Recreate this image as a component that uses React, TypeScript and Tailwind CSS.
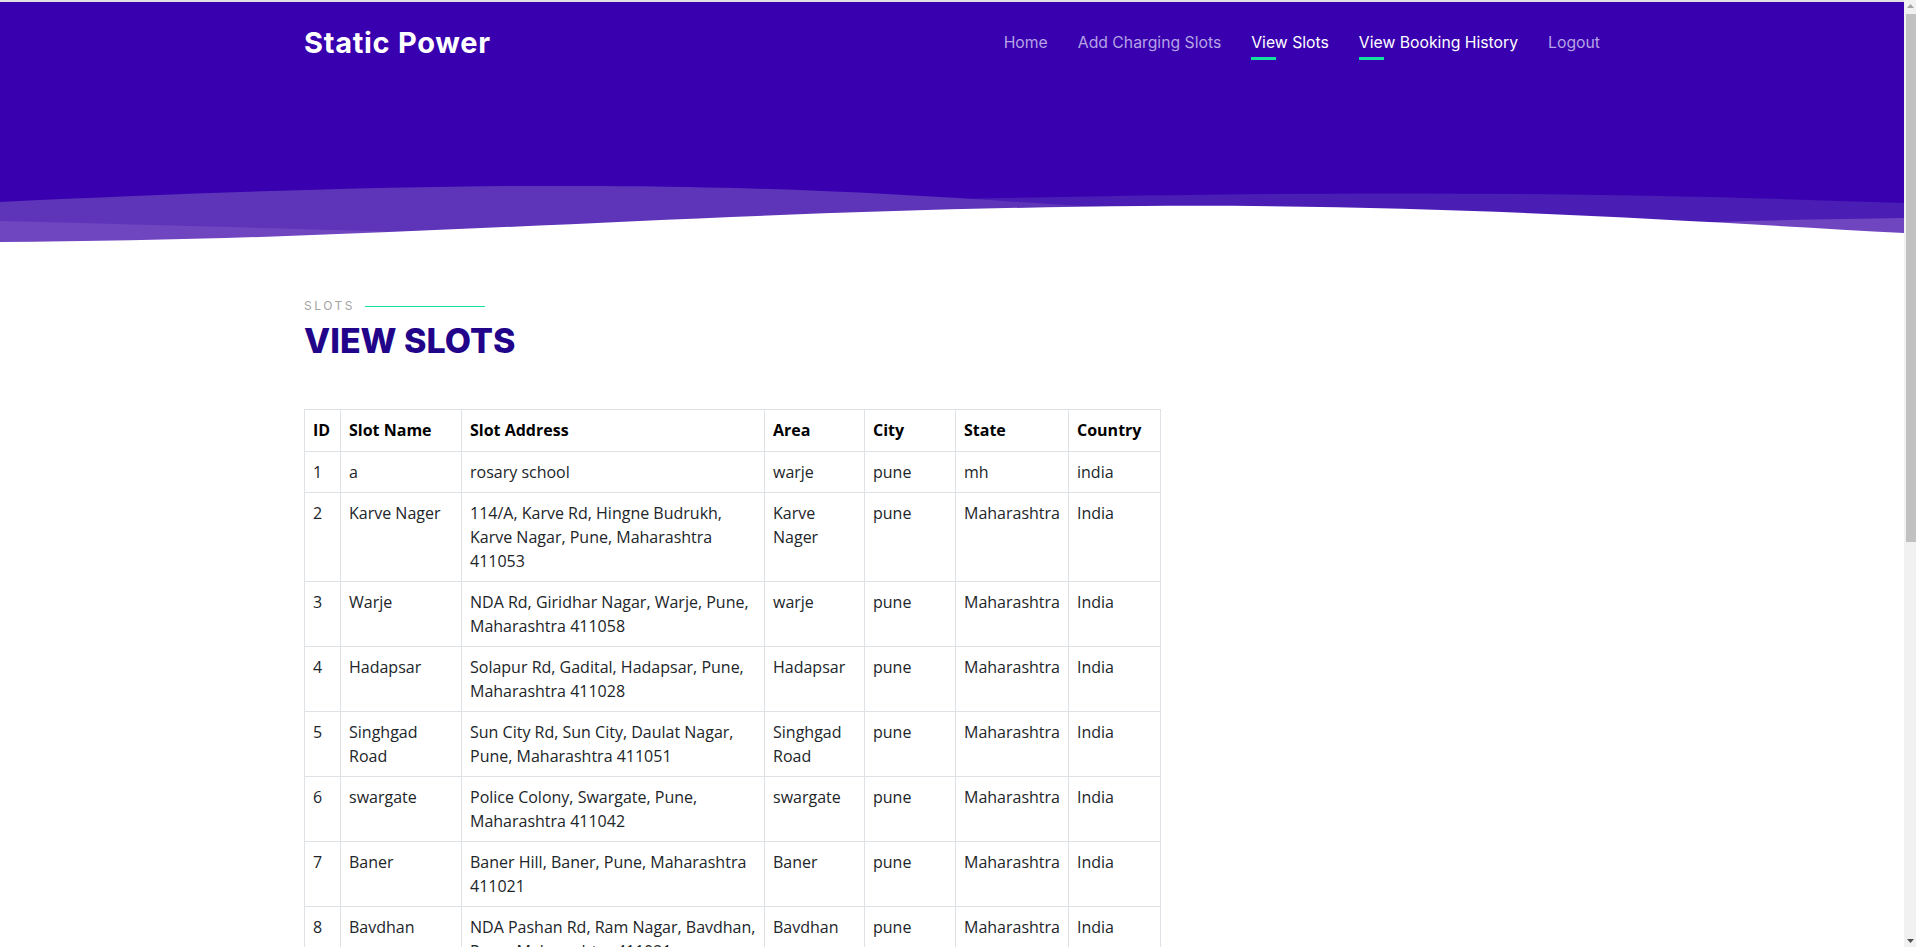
import React from 'react';

type Slot = {
  id: number;
  name: string;
  address: string;
  area: string;
  city: string;
  state: string;
  country: string;
};

const slots: Slot[] = [
  { id: 1, name: 'a', address: 'rosary school', area: 'warje', city: 'pune', state: 'mh', country: 'india' },
  {
    id: 2,
    name: 'Karve Nager',
    address: '114/A, Karve Rd, Hingne Budrukh, Karve Nagar, Pune, Maharashtra 411053',
    area: 'Karve Nager',
    city: 'pune',
    state: 'Maharashtra',
    country: 'India',
  },
  {
    id: 3,
    name: 'Warje',
    address: 'NDA Rd, Giridhar Nagar, Warje, Pune, Maharashtra 411058',
    area: 'warje',
    city: 'pune',
    state: 'Maharashtra',
    country: 'India',
  },
  {
    id: 4,
    name: 'Hadapsar',
    address: 'Solapur Rd, Gadital, Hadapsar, Pune, Maharashtra 411028',
    area: 'Hadapsar',
    city: 'pune',
    state: 'Maharashtra',
    country: 'India',
  },
  {
    id: 5,
    name: 'Singhgad Road',
    address: 'Sun City Rd, Sun City, Daulat Nagar, Pune, Maharashtra 411051',
    area: 'Singhgad Road',
    city: 'pune',
    state: 'Maharashtra',
    country: 'India',
  },
  {
    id: 6,
    name: 'swargate',
    address: 'Police Colony, Swargate, Pune, Maharashtra 411042',
    area: 'swargate',
    city: 'pune',
    state: 'Maharashtra',
    country: 'India',
  },
  {
    id: 7,
    name: 'Baner',
    address: 'Baner Hill, Baner, Pune, Maharashtra 411021',
    area: 'Baner',
    city: 'pune',
    state: 'Maharashtra',
    country: 'India',
  },
  {
    id: 8,
    name: 'Bavdhan',
    address: 'NDA Pashan Rd, Ram Nagar, Bavdhan, Pune, Maharashtra 411021',
    area: 'Bavdhan',
    city: 'pune',
    state: 'Maharashtra',
    country: 'India',
  },
];

const navLinks = [
  { label: 'Home', active: false },
  { label: 'Add Charging Slots', active: false },
  { label: 'View Slots', active: true },
  { label: 'View Booking History', active: true },
  { label: 'Logout', active: false },
];

const Wave: React.FC = () => (
  <svg
    className="absolute bottom-0 left-0 h-[60px] w-full"
    viewBox="0 0 1904 60"
    preserveAspectRatio="none"
  >
    <path d="M0,22 C400,2 700,10 960,17 C1200,12 1500,6 1904,21 L1904,60 L0,60 Z" fill="#4a1db5" />
    <path d="M0,20 C250,8 450,3 600,4 C780,5 900,12 1050,22 C1150,28 1250,36 1350,50 L1350,60 L0,60 Z" fill="#5e35b9" />
    <path d="M0,39 C200,44 420,50 720,60 L0,60 Z" fill="#6f45c0" />
    <path d="M1380,60 C1560,44 1740,38 1904,36 L1904,60 Z" fill="#6f45c0" />
    <path d="M0,60 C400,58 700,28 1144,24 C1450,22 1700,40 1904,51 L1904,60 Z" fill="#ffffff" />
  </svg>
);

const Header: React.FC = () => (
  <header className="relative h-[240px] bg-[#3800ae] overflow-hidden">
    <div className="mx-auto w-[1320px] px-3 pt-[16px]">
      <div className="flex h-[50px] items-center justify-between">
        <a className="text-[29px] font-bold text-white tracking-[0.7px] font-['Inter',sans-serif]">
          Static Power
        </a>
        <nav className="flex items-center gap-[30px] font-['Inter',sans-serif] text-[15.75px] leading-6">
          {navLinks.map((link) => (
            <a
              key={link.label}
              className={`relative ${link.active ? 'text-white' : 'text-[#b6a3e6]'}`}
            >
              {link.label}
              {link.active && (
                <span className="absolute left-0 -bottom-[5px] h-[3px] w-[25px] bg-[#14e0a0]" />
              )}
            </a>
          ))}
        </nav>
      </div>
    </div>
    <Wave />
  </header>
);

const SlotsTable: React.FC = () => (
  <table className="mt-[48px] w-[856px] table-fixed border-collapse font-['Open_Sans',sans-serif] text-base leading-6 text-[#212529]">
    <colgroup>
      <col className="w-[36px]" />
      <col className="w-[121px]" />
      <col className="w-[303px]" />
      <col className="w-[100px]" />
      <col className="w-[91px]" />
      <col className="w-[113px]" />
      <col className="w-[92px]" />
    </colgroup>
    <thead>
      <tr>
        {['ID', 'Slot Name', 'Slot Address', 'Area', 'City', 'State', 'Country'].map((h) => (
          <th
            key={h}
            className="border border-[#dee2e6] px-2 pt-2 pb-[9px] text-left align-top font-bold text-black"
          >
            {h}
          </th>
        ))}
      </tr>
    </thead>
    <tbody>
      {slots.map((s) => (
        <tr key={s.id}>
          <td className="border border-[#dee2e6] p-2 align-top">{s.id}</td>
          <td className="border border-[#dee2e6] p-2 align-top">{s.name}</td>
          <td className="border border-[#dee2e6] p-2 align-top">{s.address}</td>
          <td className="border border-[#dee2e6] p-2 align-top">{s.area}</td>
          <td className="border border-[#dee2e6] p-2 align-top">{s.city}</td>
          <td className="border border-[#dee2e6] p-2 align-top">{s.state}</td>
          <td className="border border-[#dee2e6] p-2 align-top">{s.country}</td>
        </tr>
      ))}
    </tbody>
  </table>
);

// browser-style scrollbar strip on the right edge
const ScrollBar: React.FC = () => (
  <div className="flex w-[12px] shrink-0 flex-col bg-[#f1f1f1]">
    <div className="flex h-[12px] items-center justify-center">
      <svg width="7" height="4" viewBox="0 0 7 4">
        <path d="M0,4 L3.5,0 L7,4 Z" fill="#a3a3a3" />
      </svg>
    </div>
    <div className="ml-[2px] mt-[2px] h-[528px] bg-[#c1c1c1]" />
    <div className="flex-1" />
    <div className="flex h-[12px] items-center justify-center">
      <svg width="7" height="4" viewBox="0 0 7 4">
        <path d="M0,0 L7,0 L3.5,4 Z" fill="#505050" />
      </svg>
    </div>
  </div>
);

export default function App() {
  return (
    <div className="flex h-screen bg-white">
      <div className="min-w-0 flex-1 overflow-hidden">
        <div className="h-[2px] bg-[#e2e2e2]" />
        <Header />
        <main className="mx-auto w-[1320px] px-3 pt-[54px] pb-[600px]">
          <div className="flex items-center font-['Inter',sans-serif]">
            <span className="text-[12px] leading-5 tracking-[2.5px] text-[#a3a3a3]">SLOTS</span>
            <span className="ml-[10px] h-px w-[120px] bg-[#14e0a0]" />
          </div>
          <h1 className="mt-[5px] font-['Inter',sans-serif] text-[34px] font-extrabold leading-10 text-[#21048a]">
            VIEW SLOTS
          </h1>
          <SlotsTable />
        </main>
      </div>
      <ScrollBar />
    </div>
  );
}
